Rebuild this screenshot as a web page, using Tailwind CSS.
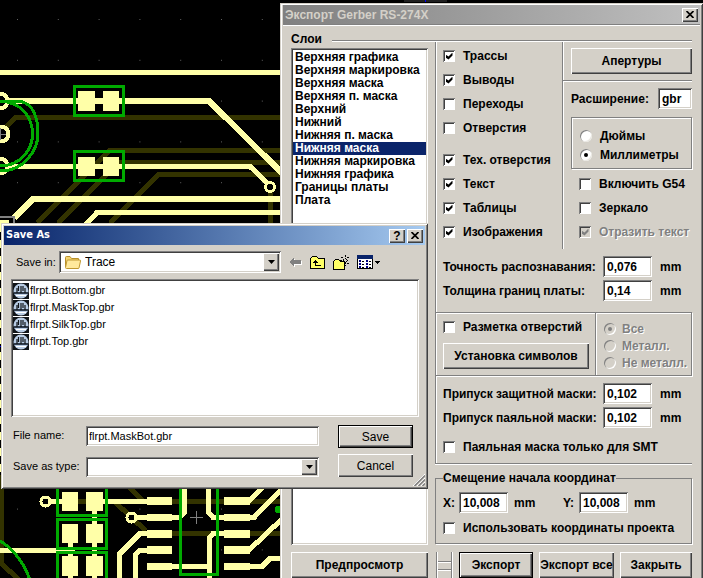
<!DOCTYPE html>
<html lang="ru">
<head>
  <meta charset="UTF-8" />
  <meta name="viewport" content="width=device-width, initial-scale=1.0" />
  <title>Экспорт Gerber RS-274X</title>
  <script src="https://cdn.jsdelivr.net/npm/@tailwindcss/browser@4"></script>
</head>
<body class="relative min-h-screen overflow-hidden bg-black text-black">

  <!-- Board canvas -->
  <svg class="absolute left-0 top-0" width="703" height="578" viewBox="0 0 703 578" fill="none" shape-rendering="crispEdges">
    <defs>
      <pattern id="dots" x="17" y="19" width="40.8" height="40.8" patternUnits="userSpaceOnUse">
        <rect width="1" height="1" fill="#606060" />
      </pattern>
    </defs>
    <rect width="282" height="578" fill="url(#dots)" />
    <path d="M404 1H447" stroke="#202020" stroke-width="2" />
    <path d="M425 0V2" stroke="#0000ff" />
    <!-- bottom layer -->
    <g stroke="#333300" stroke-width="5">
      <path d="M2 131L16 117.500H282" />
      <path d="M37 223L110 150H282" />
      <path d="M58 223L119 162.500H282" />
      <path d="M110 223L159 174.500H282" />
      <path d="M270.500 190V226" />
      <path d="M1 475V563L19 580" />
      <path d="M78 501.500H282" />
      <path d="M145 533.500H282" />
      <path d="M130 488L143 501M115 502L146 531" />
    </g>
    <!-- top layer tracks -->
    <g stroke="#ffffa8" stroke-width="5">
      <path d="M0 72.500H282" />
      <path d="M0 101H209L282 173" stroke-width="6" />
      <path d="M0 166.500H250L268 184" />
      <path d="M14 218L33 199H282" stroke-width="6" />
      <path d="M86 224L97 212.500H282" />
      <path d="M49 501.500H66M103 501.500H150" />
      <path d="M94.500 500V578M70 540V578" />
      <path d="M0 550.500H75" />
      <path d="M135 517.500H150M170 517.500H180L184.500 512V488" />
      <path d="M150 533.500H140L119.500 554V578" />
      <path d="M150 550H140L135.500 555V578" />
      <path d="M170 566.500H209" />
      <path d="M208.500 488V512L213 517.500H228" />
      <path d="M209.500 578V538L213 533.500H228" />
      <path d="M248 501.500L263 487" />
      <path d="M248 517.500H254L282 489" />
      <path d="M248 551L282 519" />
      <path d="M248 566.500H262L270 558.500H282" />
    </g>
    <!-- vias -->
    <g stroke="#ffffa8" fill="#000">
      <circle cx="0" cy="101" r="7.500" stroke-width="4" />
      <circle cx="1" cy="134" r="7.500" stroke-width="4" />
      <circle cx="0" cy="166" r="7.500" stroke-width="4" />
      <circle cx="270" cy="187" r="4.500" stroke-width="3" />
      <circle cx="45.500" cy="501.500" r="4.500" stroke-width="3" />
      <circle cx="131.500" cy="517.500" r="4.500" stroke-width="3" />
    </g>
    <!-- pads -->
    <g fill="#ffffa8">
      <path d="M78 91h17v20h-17zM103 91h16v20h-16zM78 157h17v19h-17zM103 157h16v19h-16z" />
      <path d="M62 492h16v19h-16zM86 492h17v19h-17zM62 524h16v19h-16zM86 524h17v19h-17zM62 556h16v20h-16zM86 556h17v20h-17z" />
      <path d="M147 497h25v8h-25zM147 514h25v7h-25zM147 530h25v8h-25zM147 546h25v8h-25zM147 563h25v7h-25z" />
      <path d="M224 497h26v8h-26zM224 514h26v7h-26zM224 530h26v8h-26zM224 546h26v8h-26zM224 563h26v7h-26z" />
    </g>
    <!-- silkscreen -->
    <g stroke="#00aa00" stroke-width="3">
      <path d="M74.500 86.500H123.500V115.500H74.500ZM74.500 151.500H123.500V180.500H74.500Z" />
      <path d="M57.500 484.500H106.500V515.500H57.500ZM57.500 519.500H106.500V548.500H57.500ZM57.500 552.500H106.500V582.500H57.500Z" />
      <path d="M0 101H20C35 105 38 119 38 134S25 171 0 171" />
      <path d="M0 101C22 102 32.500 118 32.500 134S20 166 0 166" />
      <path d="M0 541C12 548 24 562 30 580" />
      <path d="M180.500 484V574.500H217.500V484" />
    </g>
    <circle cx="278" cy="509.500" r="3.500" fill="#00aa00" />
    <path d="M190 517.500H203M196.500 511V524M-4 134.500H6M.5 128V140" stroke="#808080" />
    <path d="M0 217H14V226" stroke="#808080" stroke-width="2" />
    <path d="M0 222H9" stroke="#ffffa8" stroke-width="4" />
    <path d="M.5 224V475" stroke="#ffffa8" stroke-width="3" stroke-dasharray="8 8" />
    <path d="M0 346.500H2" stroke="#0000ff" />
  </svg>

  <!-- Export dialog -->
  <section class="absolute left-[280px] right-0 top-[3px] bg-[#d4d0c8] px-[3px] pb-2 pt-0.5 font-['Liberation_Sans',sans-serif] text-xs font-bold shadow-[inset_1px_1px_#d4d0c8,inset_-1px_0_#404040,inset_2px_2px_white,inset_-2px_0_#808080]">
    <header class="flex h-[19px] items-center justify-between bg-linear-to-r from-[#808080] to-[#c0c0c0] pl-0.5 pr-0.5">
      <h1 class="text-[#d4d0c8]">Экспорт Gerber RS-274X</h1>
      <button aria-label="Закрыть окно" class="flex h-3.5 w-4 items-center justify-center bg-[#d4d0c8] shadow-[inset_1px_1px_white,inset_-1px_-1px_#404040,inset_-2px_-2px_#808080]">
        <svg width="8" height="7" viewBox="0 0 8 7" stroke="#000" stroke-width="1.700"><path d="M.5 0L7.500 7M7.500 0L.5 7" /></svg>
      </button>
    </header>
    <div class="h-0.5 border-t border-[#808080] bg-white"></div>

    <div class="pl-2 pr-2 pt-1">
      <div class="flex h-[18px] items-center gap-2.5">
        <h2 class="leading-[18px]">Слои</h2>
        <div class="mt-1 h-0.5 flex-1 border-t border-[#808080] bg-white"></div>
      </div>

      <div class="flex gap-[7px]">
        <!-- Layers -->
        <div class="flex w-[137px] flex-col gap-[7px]">
          <ul role="listbox" aria-label="Слои" class="flex-1 bg-white px-0.5 pt-[3px] leading-[13px] shadow-[inset_1px_1px_#808080,inset_-1px_-1px_white,inset_2px_2px_#404040,inset_-2px_-2px_#d4d0c8]">
            <li role="option" class="pl-0.5 whitespace-nowrap">Верхняя графика</li>
            <li role="option" class="pl-0.5 whitespace-nowrap">Верхняя маркировка</li>
            <li role="option" class="pl-0.5 whitespace-nowrap">Верхняя маска</li>
            <li role="option" class="pl-0.5 whitespace-nowrap">Верхняя п. маска</li>
            <li role="option" class="pl-0.5 whitespace-nowrap">Верхний</li>
            <li role="option" class="pl-0.5 whitespace-nowrap">Нижний</li>
            <li role="option" class="pl-0.5 whitespace-nowrap">Нижняя п. маска</li>
            <li role="option" aria-selected="true" class="bg-[#0a246a] pl-0.5 whitespace-nowrap text-white">Нижняя маска</li>
            <li role="option" class="pl-0.5 whitespace-nowrap">Нижняя маркировка</li>
            <li role="option" class="pl-0.5 whitespace-nowrap">Нижняя графика</li>
            <li role="option" class="pl-0.5 whitespace-nowrap">Границы платы</li>
            <li role="option" class="pl-0.5 whitespace-nowrap">Плата</li>
          </ul>
          <button class="h-[26px] shadow-[inset_1px_1px_white,inset_-1px_-1px_#404040,inset_-2px_-2px_#808080]">Предпросмотр</button>
        </div>

        <!-- Options -->
        <div class="-mt-1.5 min-w-0 flex-1">
          <div class="border-l border-[#808080] pb-[11px] shadow-[inset_1px_0_white]">
            <div class="flex">
              <div class="w-[126px] pl-[7px] pt-0.5">
                <label class="flex h-6 items-center gap-2 whitespace-nowrap"><input type="checkbox" checked class="grid size-3 shrink-0 appearance-none place-content-center bg-white shadow-[inset_1px_1px_#808080,inset_-1px_-1px_white,inset_2px_2px_#404040] checked:before:size-[7px] checked:before:bg-black checked:before:[clip-path:polygon(0_2px,3px_4px,7px_0,7px_3px,3px_7px,0_5px)]" />Трассы</label>
                <label class="flex h-6 items-center gap-2 whitespace-nowrap"><input type="checkbox" checked class="grid size-3 shrink-0 appearance-none place-content-center bg-white shadow-[inset_1px_1px_#808080,inset_-1px_-1px_white,inset_2px_2px_#404040] checked:before:size-[7px] checked:before:bg-black checked:before:[clip-path:polygon(0_2px,3px_4px,7px_0,7px_3px,3px_7px,0_5px)]" />Выводы</label>
                <label class="flex h-6 items-center gap-2 whitespace-nowrap"><input type="checkbox" class="grid size-3 shrink-0 appearance-none place-content-center bg-white shadow-[inset_1px_1px_#808080,inset_-1px_-1px_white,inset_2px_2px_#404040] checked:before:size-[7px] checked:before:bg-black checked:before:[clip-path:polygon(0_2px,3px_4px,7px_0,7px_3px,3px_7px,0_5px)]" />Переходы</label>
                <label class="flex h-6 items-center gap-2 whitespace-nowrap"><input type="checkbox" class="grid size-3 shrink-0 appearance-none place-content-center bg-white shadow-[inset_1px_1px_#808080,inset_-1px_-1px_white,inset_2px_2px_#404040] checked:before:size-[7px] checked:before:bg-black checked:before:[clip-path:polygon(0_2px,3px_4px,7px_0,7px_3px,3px_7px,0_5px)]" />Отверстия</label>
                <label class="mt-2 flex h-6 items-center gap-2 whitespace-nowrap"><input type="checkbox" checked class="grid size-3 shrink-0 appearance-none place-content-center bg-white shadow-[inset_1px_1px_#808080,inset_-1px_-1px_white,inset_2px_2px_#404040] checked:before:size-[7px] checked:before:bg-black checked:before:[clip-path:polygon(0_2px,3px_4px,7px_0,7px_3px,3px_7px,0_5px)]" />Тех. отверстия</label>
                <label class="flex h-6 items-center gap-2 whitespace-nowrap"><input type="checkbox" checked class="grid size-3 shrink-0 appearance-none place-content-center bg-white shadow-[inset_1px_1px_#808080,inset_-1px_-1px_white,inset_2px_2px_#404040] checked:before:size-[7px] checked:before:bg-black checked:before:[clip-path:polygon(0_2px,3px_4px,7px_0,7px_3px,3px_7px,0_5px)]" />Текст</label>
                <label class="flex h-6 items-center gap-2 whitespace-nowrap"><input type="checkbox" checked class="grid size-3 shrink-0 appearance-none place-content-center bg-white shadow-[inset_1px_1px_#808080,inset_-1px_-1px_white,inset_2px_2px_#404040] checked:before:size-[7px] checked:before:bg-black checked:before:[clip-path:polygon(0_2px,3px_4px,7px_0,7px_3px,3px_7px,0_5px)]" />Таблицы</label>
                <label class="flex h-6 items-center gap-2 whitespace-nowrap"><input type="checkbox" checked class="grid size-3 shrink-0 appearance-none place-content-center bg-white shadow-[inset_1px_1px_#808080,inset_-1px_-1px_white,inset_2px_2px_#404040] checked:before:size-[7px] checked:before:bg-black checked:before:[clip-path:polygon(0_2px,3px_4px,7px_0,7px_3px,3px_7px,0_5px)]" />Изображения</label>
              </div>

              <div class="min-w-0 flex-1 border-l border-[#808080] pb-[5px] pt-1.5 shadow-[inset_1px_0_white]">
                <div class="pl-2">
                  <button class="h-[26px] w-full shadow-[inset_1px_1px_white,inset_-1px_-1px_#404040,inset_-2px_-2px_#808080]">Апертуры</button>
                </div>
                <div class="mt-1.5 h-0.5 border-t border-[#808080] bg-white"></div>
                <div class="mt-1.5 flex items-center justify-between pl-2">
                  <label for="ext">Расширение:</label>
                  <input id="ext" type="text" value="gbr" class="h-[21px] w-[34px] bg-white pl-1 shadow-[inset_1px_1px_#808080,inset_-1px_-1px_white,inset_2px_2px_#404040,inset_-2px_-2px_#d4d0c8]" />
                </div>
                <div class="ml-2 mt-2 h-[52px] border border-[#808080] pl-2 pt-2 shadow-[inset_1px_1px_white,1px_1px_white]">
                  <label class="flex h-[19px] items-center gap-2"><input type="radio" name="unit" class="grid size-3 appearance-none place-content-center rounded-full bg-white shadow-[inset_1px_1px_#808080,inset_-1px_-1px_#e8e6e0] checked:before:size-1 checked:before:rounded-full checked:before:bg-black" />Дюймы</label>
                  <label class="flex h-[19px] items-center gap-2"><input type="radio" name="unit" checked class="grid size-3 appearance-none place-content-center rounded-full bg-white shadow-[inset_1px_1px_#808080,inset_-1px_-1px_#e8e6e0] checked:before:size-1 checked:before:rounded-full checked:before:bg-black" />Миллиметры</label>
                </div>
                <div class="mt-[3px] pl-4">
                  <label class="flex h-6 items-center gap-2 whitespace-nowrap"><input type="checkbox" class="grid size-3 shrink-0 appearance-none place-content-center bg-white shadow-[inset_1px_1px_#808080,inset_-1px_-1px_white,inset_2px_2px_#404040] checked:before:size-[7px] checked:before:bg-black checked:before:[clip-path:polygon(0_2px,3px_4px,7px_0,7px_3px,3px_7px,0_5px)]" />Включить G54</label>
                  <label class="flex h-6 items-center gap-2 whitespace-nowrap"><input type="checkbox" class="grid size-3 shrink-0 appearance-none place-content-center bg-white shadow-[inset_1px_1px_#808080,inset_-1px_-1px_white,inset_2px_2px_#404040] checked:before:size-[7px] checked:before:bg-black checked:before:[clip-path:polygon(0_2px,3px_4px,7px_0,7px_3px,3px_7px,0_5px)]" />Зеркало</label>
                  <label class="flex h-6 items-center gap-2 whitespace-nowrap text-[#808080] text-shadow-[1px_1px_white]"><input type="checkbox" checked disabled class="grid size-3 shrink-0 appearance-none place-content-center bg-[#d4d0c8] shadow-[inset_1px_1px_#808080,inset_-1px_-1px_white,inset_2px_2px_#404040] checked:before:size-[7px] checked:before:bg-[#808080] checked:before:[clip-path:polygon(0_2px,3px_4px,7px_0,7px_3px,3px_7px,0_5px)]" />Отразить текст</label>
                </div>
              </div>
            </div>

            <div class="grid grid-cols-[160px_49px_1fr] items-center gap-y-[3px] pl-[7px] pt-[7px]">
              <label for="precision" class="whitespace-nowrap">Точность распознавания:</label>
              <input id="precision" type="text" value="0,076" class="h-[21px] bg-white pl-1 shadow-[inset_1px_1px_#808080,inset_-1px_-1px_white,inset_2px_2px_#404040,inset_-2px_-2px_#d4d0c8]" />
              <span class="pl-2">mm</span>
              <label for="thickness" class="whitespace-nowrap">Толщина границ платы:</label>
              <input id="thickness" type="text" value="0,14" class="h-[21px] bg-white pl-1 shadow-[inset_1px_1px_#808080,inset_-1px_-1px_white,inset_2px_2px_#404040,inset_-2px_-2px_#d4d0c8]" />
              <span class="pl-2">mm</span>
            </div>
          </div>

          <!-- Drill marks -->
          <div class="flex border border-[#808080] shadow-[inset_1px_1px_white,1px_1px_white]">
            <div class="w-[159px] pb-1.5 pl-[7px] pt-0.5">
              <label class="flex h-6 items-center gap-2 whitespace-nowrap"><input type="checkbox" class="grid size-3 shrink-0 appearance-none place-content-center bg-white shadow-[inset_1px_1px_#808080,inset_-1px_-1px_white,inset_2px_2px_#404040] checked:before:size-[7px] checked:before:bg-black checked:before:[clip-path:polygon(0_2px,3px_4px,7px_0,7px_3px,3px_7px,0_5px)]" />Разметка отверстий</label>
              <button class="mt-1 h-[26px] w-[146px] whitespace-nowrap shadow-[inset_1px_1px_white,inset_-1px_-1px_#404040,inset_-2px_-2px_#808080]">Установка символов</button>
            </div>
            <div class="min-w-0 flex-1 border-l border-[#808080] pl-2 pt-[7px] text-[#808080] shadow-[inset_1px_0_white] text-shadow-[1px_1px_white]">
              <label class="flex h-[17px] items-center gap-1.5 whitespace-nowrap"><input type="radio" name="drill" checked disabled class="grid size-3 shrink-0 appearance-none place-content-center rounded-full bg-[#d4d0c8] shadow-[inset_1px_1px_#808080,inset_-1px_-1px_white] checked:before:size-1 checked:before:rounded-full checked:before:bg-[#808080]" />Все</label>
              <label class="flex h-[17px] items-center gap-1.5 whitespace-nowrap"><input type="radio" name="drill" disabled class="grid size-3 shrink-0 appearance-none place-content-center rounded-full bg-[#d4d0c8] shadow-[inset_1px_1px_#808080,inset_-1px_-1px_white] checked:before:size-1 checked:before:rounded-full checked:before:bg-[#808080]" />Металл.</label>
              <label class="flex h-[17px] items-center gap-1.5 whitespace-nowrap"><input type="radio" name="drill" disabled class="grid size-3 shrink-0 appearance-none place-content-center rounded-full bg-[#d4d0c8] shadow-[inset_1px_1px_#808080,inset_-1px_-1px_white] checked:before:size-1 checked:before:rounded-full checked:before:bg-[#808080]" />Не металл.</label>
            </div>
          </div>

          <!-- Mask clearances -->
          <div class="border-b border-l border-[#808080] pb-1 pl-[7px] pt-[7px] shadow-[inset_1px_0_white,0_1px_white]">
            <div class="grid grid-cols-[160px_49px_1fr] items-center gap-y-[3px]">
              <label for="solder" class="whitespace-nowrap">Припуск защитной маски:</label>
              <input id="solder" type="text" value="0,102" class="h-[21px] bg-white pl-1 shadow-[inset_1px_1px_#808080,inset_-1px_-1px_white,inset_2px_2px_#404040,inset_-2px_-2px_#d4d0c8]" />
              <span class="pl-2">mm</span>
              <label for="paste" class="whitespace-nowrap">Припуск паяльной маски:</label>
              <input id="paste" type="text" value="0,102" class="h-[21px] bg-white pl-1 shadow-[inset_1px_1px_#808080,inset_-1px_-1px_white,inset_2px_2px_#404040,inset_-2px_-2px_#d4d0c8]" />
              <span class="pl-2">mm</span>
            </div>
            <label class="mt-[7px] flex h-6 items-center gap-2 whitespace-nowrap"><input type="checkbox" class="grid size-3 shrink-0 appearance-none place-content-center bg-white shadow-[inset_1px_1px_#808080,inset_-1px_-1px_white,inset_2px_2px_#404040] checked:before:size-[7px] checked:before:bg-black checked:before:[clip-path:polygon(0_2px,3px_4px,7px_0,7px_3px,3px_7px,0_5px)]" />Паяльная маска только для SMT</label>
          </div>

          <!-- Origin offset -->
          <fieldset class="mt-[7px] min-w-0 border border-[#808080] pb-[3px] pl-[7px] pt-[7px] shadow-[1px_1px_white]">
            <legend class="whitespace-nowrap leading-[14px]">Смещение начала координат</legend>
            <div class="flex items-center">
              <label for="ox" class="w-4">X:</label>
              <input id="ox" type="text" value="10,008" class="h-[21px] w-[49px] bg-white pl-1 shadow-[inset_1px_1px_#808080,inset_-1px_-1px_white,inset_2px_2px_#404040,inset_-2px_-2px_#d4d0c8]" />
              <span class="w-[55px] pl-1.5">mm</span>
              <label for="oy" class="w-4">Y:</label>
              <input id="oy" type="text" value="10,008" class="h-[21px] w-[49px] bg-white pl-1 shadow-[inset_1px_1px_#808080,inset_-1px_-1px_white,inset_2px_2px_#404040,inset_-2px_-2px_#d4d0c8]" />
              <span class="pl-1.5">mm</span>
            </div>
            <label class="mt-[3px] flex h-6 items-center gap-2 whitespace-nowrap"><input type="checkbox" class="grid size-3 shrink-0 appearance-none place-content-center bg-white shadow-[inset_1px_1px_#808080,inset_-1px_-1px_white,inset_2px_2px_#404040] checked:before:size-[7px] checked:before:bg-black checked:before:[clip-path:polygon(0_2px,3px_4px,7px_0,7px_3px,3px_7px,0_5px)]" />Использовать координаты проекта</label>
          </fieldset>

          <div class="mt-2 flex h-[26px] gap-1.5">
            <svg width="18" height="26" viewBox="0 0 18 26" shape-rendering="crispEdges">
              <path d="M1.500 0V26M16.500 0V26M1 9.500H17M1 17.500H17" stroke="#808080" />
              <path d="M2.500 0V26M17.500 0V26M2 10.500H16M2 18.500H16" stroke="#fff" />
            </svg>
            <button class="w-[74px] border border-black shadow-[inset_1px_1px_white,inset_-1px_-1px_#404040,inset_-2px_-2px_#808080]">Экспорт</button>
            <button class="w-[75px] overflow-hidden whitespace-nowrap shadow-[inset_1px_1px_white,inset_-1px_-1px_#404040,inset_-2px_-2px_#808080]">Экспорт все</button>
            <button class="flex-1 shadow-[inset_1px_1px_white,inset_-1px_-1px_#404040,inset_-2px_-2px_#808080]">Закрыть</button>
          </div>
        </div>
      </div>
    </div>
  </section>

  <!-- Save As dialog -->
  <section lang="en" class="absolute left-px top-[223px] w-[427px] bg-[#d4d0c8] p-[3px] pb-3 font-['Liberation_Sans',sans-serif] text-[11px] shadow-[inset_1px_1px_#d4d0c8,inset_-1px_-1px_#404040,inset_2px_2px_white,inset_-2px_-2px_#808080]">
    <header class="flex h-[19px] items-center justify-between bg-linear-to-r from-[#0a246a] to-[#a6caf0] pl-0.5 pr-0.5">
      <h2 class="font-['DejaVu_Sans_Condensed','DejaVu_Sans',sans-serif] font-bold text-white">Save As</h2>
      <div class="flex gap-0.5">
        <button aria-label="Help" class="h-3.5 w-4 bg-[#d4d0c8] text-xs font-bold leading-[14px] shadow-[inset_1px_1px_white,inset_-1px_-1px_#404040,inset_-2px_-2px_#808080]">?</button>
        <button aria-label="Close" class="flex h-3.5 w-4 items-center justify-center bg-[#d4d0c8] shadow-[inset_1px_1px_white,inset_-1px_-1px_#404040,inset_-2px_-2px_#808080]">
          <svg width="8" height="7" viewBox="0 0 8 7" stroke="#000" stroke-width="1.700"><path d="M.5 0L7.500 7M7.500 0L.5 7" /></svg>
        </button>
      </div>
    </header>

    <div class="mt-1.5 flex items-center pl-3">
      <label for="folder" class="w-[43px]">Save in:</label>
      <div class="flex h-[22px] w-[222px] items-center bg-white p-0.5 pl-1.5 shadow-[inset_1px_1px_#808080,inset_-1px_-1px_white,inset_2px_2px_#404040,inset_-2px_-2px_#d4d0c8]">
        <svg width="16" height="13" viewBox="0 0 16 13">
          <path d="M.5 11V1.500Q.5 .5 1.500 .5H5L6.500 2.500H13.500V5" fill="#f4d470" stroke="#b8902c" />
          <path d="M.5 11.500L2 4.500Q2 4 3 4H15Q15.700 4 15.500 5L14 12Q14 12.500 13 12.500H1.500Q.5 12.500 .5 11.500Z" fill="#ffe99c" stroke="#c09830" />
        </svg>
        <select id="folder" class="ml-1 h-full flex-1 appearance-none bg-white text-xs"><option>Trace</option></select>
        <span class="pointer-events-none flex h-[18px] w-4 items-center justify-center bg-[#d4d0c8] shadow-[inset_1px_1px_white,inset_-1px_-1px_#404040,inset_-2px_-2px_#808080]">
          <svg width="7" height="4"><path d="M0 0H7L3.500 4Z" /></svg>
        </span>
      </div>
      <div class="flex items-center gap-2 pl-2">
        <button aria-label="Back"><svg width="13" height="11" viewBox="0 0 13 11" shape-rendering="crispEdges">
          <path d="M1 6L6 1V4H13V8H6V11Z" fill="#fff" /><path d="M0 5L5 0V3H12V7H5V10Z" fill="#808080" />
        </svg></button>
        <button aria-label="Up one level"><svg width="15" height="13" viewBox="0 0 15 13" shape-rendering="crispEdges">
          <path d="M.5 12.500V2.500L2.500 .5H6.500L8.500 2.500H14.500V12.500Z" fill="#ffff66" stroke="#000" />
          <path d="M5.500 5V9.500H11" fill="none" stroke="#000" /><path d="M3 7L5.500 4L8 7Z" />
        </svg></button>
        <button aria-label="New folder"><svg width="16" height="15" viewBox="0 0 16 15" shape-rendering="crispEdges">
          <path d="M.5 14.500V6.500L2.500 4.500H5.500L7.500 6.500H11.500V14.500Z" fill="#ffff66" stroke="#000" />
          <path d="M12 0V4M12 7V11M7 5.500H10.500M13.500 5.500H16M8.500 2L11 4.500M15.500 2L13 4.500M15.500 9L13 6.500" stroke="#000" stroke-dasharray="1.500 1" />
        </svg></button>
        <button aria-label="Views"><svg width="24" height="14" viewBox="0 0 24 14" shape-rendering="crispEdges">
          <path d="M.5 .5H15.500V13.500H.5Z" fill="#fff" stroke="#000" /><path d="M0 0H16V4H0Z" fill="#0a246a" />
          <path d="M2 6H4M2 9H4M2 12H4M9 6H11M9 9H11M9 12H11" stroke="#000080" stroke-width="2" />
          <path d="M5 6.500H7M5 9.500H7M5 12H7M12 6.500H14M12 9.500H14M12 12H14" stroke="#000" />
          <path d="M18 6H23L20.500 9Z" />
        </svg></button>
      </div>
    </div>

    <ul class="ml-[7px] mr-1.5 mt-1.5 h-[138px] bg-white pl-0.5 pt-[3px] shadow-[inset_1px_1px_#808080,inset_-1px_-1px_white,inset_2px_2px_#404040,inset_-2px_-2px_#d4d0c8]">
      <li class="flex h-[17px] items-center gap-px"><svg width="16" height="16"><use href="#gerber" /></svg>flrpt.Bottom.gbr</li>
      <li class="flex h-[17px] items-center gap-px"><svg width="16" height="16"><use href="#gerber" /></svg>flrpt.MaskTop.gbr</li>
      <li class="flex h-[17px] items-center gap-px"><svg width="16" height="16"><use href="#gerber" /></svg>flrpt.SilkTop.gbr</li>
      <li class="flex h-[17px] items-center gap-px"><svg width="16" height="16"><use href="#gerber" /></svg>flrpt.Top.gbr</li>
    </ul>

    <div class="mt-2 flex justify-between pl-[9px] pr-3">
      <div class="grid grid-cols-[73px_233px] items-center gap-y-2.5">
        <label for="fname">File name:</label>
        <input id="fname" type="text" value="flrpt.MaskBot.gbr" class="h-5 bg-white pl-[3px] shadow-[inset_1px_1px_#808080,inset_-1px_-1px_white,inset_2px_2px_#404040,inset_-2px_-2px_#d4d0c8]" />
        <label for="ftype">Save as type:</label>
        <div class="flex h-5 bg-white p-0.5 shadow-[inset_1px_1px_#808080,inset_-1px_-1px_white,inset_2px_2px_#404040,inset_-2px_-2px_#d4d0c8]">
          <select id="ftype" class="flex-1 appearance-none bg-white"><option></option></select>
          <span class="pointer-events-none flex w-4 items-center justify-center bg-[#d4d0c8] shadow-[inset_1px_1px_white,inset_-1px_-1px_#404040,inset_-2px_-2px_#808080]">
            <svg width="7" height="4"><path d="M0 0H7L3.500 4Z" /></svg>
          </span>
        </div>
      </div>
      <div class="flex w-[75px] flex-col gap-1.5">
        <button class="h-[23px] border border-black text-xs shadow-[inset_1px_1px_white,inset_-1px_-1px_#404040,inset_-2px_-2px_#808080]">Save</button>
        <button class="h-[23px] text-xs shadow-[inset_1px_1px_white,inset_-1px_-1px_#404040,inset_-2px_-2px_#808080]">Cancel</button>
      </div>
    </div>
    <svg class="absolute bottom-[3px] right-[3px]" width="12" height="12" viewBox="0 0 12 12">
      <path d="M0 12L12 0M4 12L12 4M8 12L12 8" stroke="#fff" />
      <path d="M1.500 12L12 1.500M5.500 12L12 5.500M9.500 12L12 9.500" stroke="#808080" stroke-width="1.500" />
    </svg>
  </section>

  <svg class="absolute" width="0" height="0">
    <symbol id="gerber" viewBox="0 0 16 16">
      <rect width="16" height="16" fill="#101418" />
      <circle cx="8" cy="8" r="7.500" fill="#b8cce4" />
      <path d="M1 9H15V11H1Z" fill="#303c4c" />
      <path d="M4 10V5M8 10V3M12 10V5M5.500 3V8M10 3V8" stroke="#101418" stroke-width="1.200" />
      <path d="M3 12.500H13" stroke="#fff" />
    </symbol>
  </svg>
</body>
</html>
